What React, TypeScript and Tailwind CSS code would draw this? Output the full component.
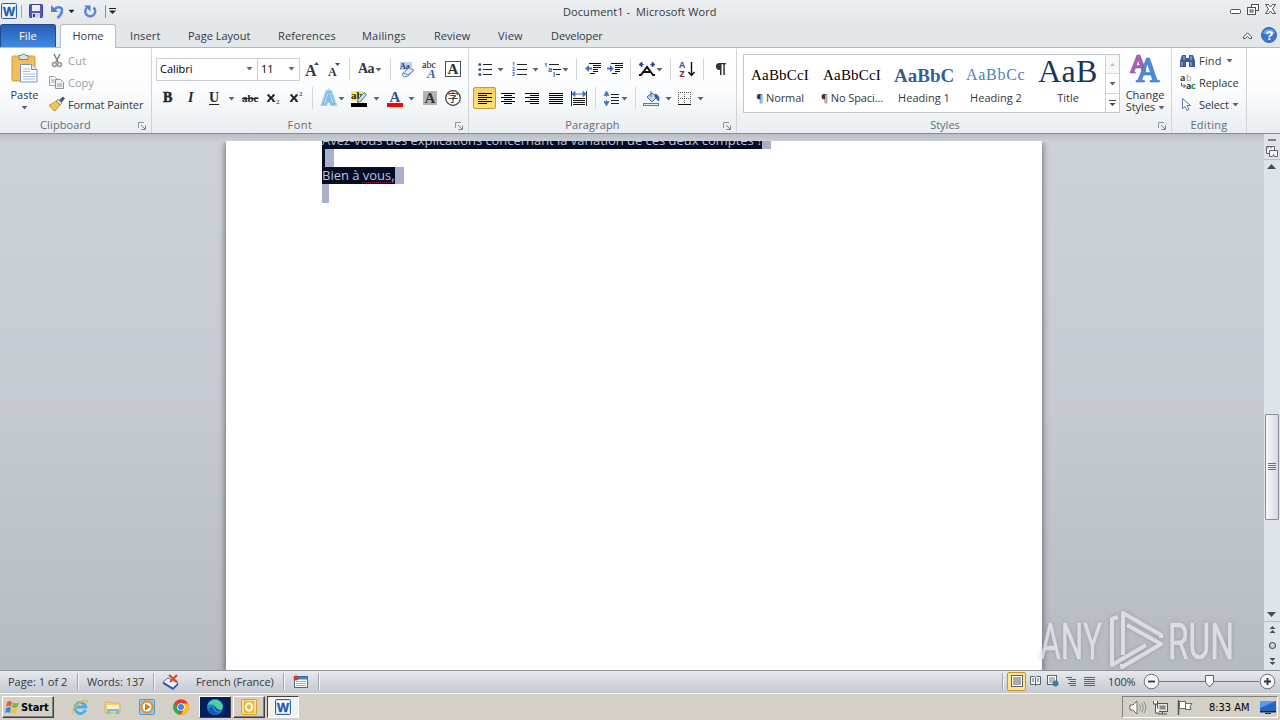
import React from 'react';

type Kids = { children?: React.ReactNode };

const Slot = ({ c = '', children }: Kids & { c?: string }) => (
  <div className={`flex shrink-0 items-center ${c}`}>{children}</div>
);
const Svg = ({ w, h, c = '', children }: Kids & { w: number; h: number; c?: string }) => (
  <svg width={w} height={h} viewBox={`0 0 ${w} ${h}`} className={`shrink-0 overflow-visible ${c}`}>{children}</svg>
);
const Arrow = ({ c = '' }: { c?: string }) => (
  <Svg w={5} h={3} c={c}><path d="M-.5 0h6L2.500 3.500z" fill="#60656c" /></Svg>
);
const Sep = () => <div className="h-[22px] w-px bg-[#d3d7dc]" />;
const Launcher = () => (
  <Svg w={8} h={8} c="absolute right-[5px] top-[10px]">
    <path d="M.5 6V.5H6" stroke="#8d939b" fill="none" />
    <path d="M3 3l4 4M7.500 3.500v4h-4" stroke="#7c838c" fill="none" />
  </Svg>
);
const GroupLabel = ({ children, launch = true, c = '' }: Kids & { launch?: boolean; c?: string }) => (
  <div className={`relative flex h-[21px] items-center justify-center pt-[3px] text-[#646c77] ${c}`}>
    {children}
    {launch && <Launcher />}
  </div>
);
const Lines = ({ rows }: { rows: [number, number][] }) => (
  <>{rows.map(([x, l], i) => <rect key={i} x={x} y={i * 2} width={l} height="1" fill="#000" />)}</>
);
const serif = 'Liberation Serif, serif';

function TitleBar() {
  return (
    <div className="flex h-[24px] items-center bg-linear-to-b from-[#edf0f3] to-[#e3e7ea] pb-[2px] text-[#33383f]">
      <Slot c="w-[21px] pl-px">
        <Svg w={16} h={16}>
          <rect x=".5" y=".5" width="15" height="15" rx="1" fill="#dce9f7" stroke="#2c62a8" />
          <rect x="2" y="2" width="12" height="12" fill="#fff" />
          <text x="2" y="13" fontSize="13" fontWeight="bold" fontFamily="Liberation Sans, sans-serif" fill="#1d5cae" stroke="#1d5cae" strokeWidth=".4" textLength="12" lengthAdjust="spacingAndGlyphs">W</text>
        </Svg>
      </Slot>
      <Slot c="w-[8px]"><div className="h-[13px] w-px bg-[#a3a8af]" /></Slot>
      <Slot c="w-[22px]">
        <Svg w={14} h={14}>
          <rect x=".5" y=".5" width="13" height="13" rx="1" fill="#5658b8" stroke="#3c3e94" />
          <rect x="3" y="1" width="8" height="6" fill="#e9effa" />
          <rect x="3" y="9" width="8" height="5" fill="#c9d3ea" />
          <rect x="4" y="10" width="2" height="3" fill="#34367f" />
        </Svg>
      </Slot>
      <Slot c="w-[18px]">
        <Svg w={13} h={13}>
          <path d="M3 5C6 1 11.500 1.500 11 5.500C10.700 8.500 9.500 10.500 6.500 13" fill="none" stroke="#5a88d6" strokeWidth="2.600" />
          <path d="M0 0v7h7z" fill="#4c80d2" />
        </Svg>
      </Slot>
      <Slot c="w-[15px]"><Svg w={5} h={3}><path d="M0 0h5L2.500 3z" fill="#222" stroke="#222" strokeWidth=".5" /></Svg></Slot>
      <Slot c="w-[21px]">
        <Svg w={13} h={13}>
          <path d="M2.500 3A5 5 0 1 0 9.500 2.500" fill="none" stroke="#5a88d6" strokeWidth="2.400" />
          <path d="M0 .5h6.500v6z" fill="#4a7fd2" />
        </Svg>
      </Slot>
      <Slot c="w-[4px]"><div className="h-[13px] w-px bg-[#8b9097]" /></Slot>
      <Svg w={7} h={6}><path d="M0 .5h7" stroke="#222" /><path d="M0 2.500h7L3.500 6z" fill="#222" /></Svg>
      <div className="ml-[447px] flex-1 whitespace-pre tracking-[0.08px]">Document1 -  Microsoft Word</div>
      <div className="flex items-center gap-[6px] pr-[4px] pb-[4px]">
        <Svg w={11} h={5} c="mt-[4px]"><rect x=".5" y=".5" width="10" height="4" rx="1" fill="#fff" stroke="#4c5159" /></Svg>
        <Svg w={12} h={11}>
          <rect x="4.500" y=".5" width="7" height="6" fill="#fff" stroke="#4c5159" />
          <rect x=".5" y="3.500" width="8" height="7" fill="#fff" stroke="#4c5159" />
          <rect x="3" y="6" width="3" height="2" fill="#fff" stroke="#4c5159" />
        </Svg>
        <Svg w={11} h={10}>
          <path d="M.5.5h3l2 2.500 2-2.500h3l-3 4.500 3 4.500h-3l-2-2.500-2 2.500h-3l3-4.500z" fill="#fff" stroke="#4c5159" />
        </Svg>
      </div>
    </div>
  );
}

function Tabs() {
  return (
    <div className="flex h-[24px] items-stretch border-b border-[#b4b9c0] bg-[#e3e7ea] text-[#33383f]">
      <div className="flex w-[56px] items-center justify-center rounded-t-[3px] border border-b-0 border-[#1c4a94] bg-linear-to-b from-[#2a5cb4] to-[#3f8ae0] pb-px text-white tracking-[0.1px]">File</div>
      <div className="-mb-px ml-[4px] flex w-[56px] items-center justify-center rounded-t-[3px] border border-b-0 border-[#b9bec5] bg-white pb-[2px]">Home</div>
      <div className="flex flex-1 items-center">
        <Slot c="w-[58px] pl-[14px] tracking-[0.150px]">Insert</Slot>
        <Slot c="w-[90px] pl-[14px] tracking-[0px]">Page Layout</Slot>
        <Slot c="w-[84px] pl-[14px] tracking-[0.100px]">References</Slot>
        <Slot c="w-[72px] pl-[14px] tracking-[0.200px]">Mailings</Slot>
        <Slot c="w-[64px] pl-[14px] tracking-[0.050px]">Review</Slot>
        <Slot c="w-[53px] pl-[14px] tracking-[0.150px]">View</Slot>
        <Slot c="pl-[14px] tracking-[-0.100px]">Developer</Slot>
      </div>
      <div className="flex items-center gap-[9px] pr-[3px] pb-px">
        <Svg w={9} h={7}><path d="M.5 5L4.500.8 8.500 5v1.500h-2L4.500 4.300 2.500 6.500h-2z" fill="#fff" stroke="#4c5159" /></Svg>
        <Svg w={16} h={16}>
          <circle cx="8" cy="8" r="7.500" fill="#3f78c8" stroke="#2f62ae" />
          <path d="M2 6a6.500 6 0 0 1 12 0q-6 3-12 0" fill="#78a6e4" />
          <text x="4.500" y="13" fontSize="13" fontWeight="bold" fontFamily="Liberation Sans, sans-serif" fill="#fff">?</text>
        </Svg>
      </div>
    </div>
  );
}

function Clipboard() {
  return (
    <div className="flex w-[152px] flex-col border-r border-[#cfd4da] pt-[6px]">
      <div className="flex h-[58px]">
        <div className="-mt-px flex w-[49px] flex-col items-center">
          <Svg w={27} h={31}>
            <rect x="1" y="3" width="23" height="25" rx="1.500" fill="#f0be5c" stroke="#d09a35" />
            <path d="M8 2.500h2a3 3 0 0 1 5 0h2v4H8z" fill="#dde0e4" stroke="#7e8389" />
            <path d="M9.500 11.500h11l5.500 5v12.500H9.500z" fill="#fbfcff" stroke="#7e93b4" />
            <path d="M20.500 11.500v5H26" fill="#dce6f4" stroke="#7e93b4" />
            <path d="M12 16h7M12 18.500h7M12 21h12M12 23.500h12M12 26h12" stroke="#a8bad6" />
          </Svg>
          <div className="mt-[4px] leading-[14px]">Paste</div>
          <Arrow c="mt-[4px]" />
        </div>
        <div className="-mt-[5px] flex flex-col text-[#9a9fa6]">
          <Slot c="h-[22px]">
            <Slot c="w-[19px] pl-[3px]"><Svg w={10} h={13}><path d="M2 0l4 8M8 0L4 8" stroke="#7e8389" strokeWidth="1.500" /><circle cx="2.500" cy="10.500" r="2" fill="none" stroke="#8e9399" strokeWidth="1.600" /><circle cx="7.500" cy="10.500" r="2" fill="none" stroke="#8e9399" strokeWidth="1.600" /></Svg></Slot>
            <span className="tracking-[0.3px]">Cut</span>
          </Slot>
          <Slot c="h-[22px]">
            <Slot c="w-[19px]"><Svg w={15} h={13}><path d="M.5.5h5l3 3v6h-8z" fill="#f5f6f7" stroke="#9ea3a9" /><path d="M2 4h4M2 6h4" stroke="#a4a8ad" /><path d="M6.500 3.500h5l3 3v6h-8z" fill="#f0f1f3" stroke="#8e9399" /><path d="M8 8h5M8 10h5" stroke="#94999f" /></Svg></Slot>
            <span>Copy</span>
          </Slot>
          <Slot c="h-[22px] text-[#33373d]">
            <Slot c="w-[19px]"><Svg w={16} h={14}><path d="M1 8l6-4 4 4-5 6C4 13 2 11 0 8z" fill="#efc64a" stroke="#b78f2c" strokeWidth=".8" /><path d="M7 4l2-2 4 4-2 2z" fill="#d8dbe0" stroke="#777" strokeWidth=".7" /><path d="M10.500 3L14 0l1.500 1.500-3 3.500z" fill="#54508c" stroke="#54508c" /></Svg></Slot>
            <span className="whitespace-nowrap tracking-[-0.1px]">Format Painter</span>
          </Slot>
        </div>
      </div>
      <GroupLabel c="pr-[20px] tracking-[0.1px]">Clipboard</GroupLabel>
    </div>
  );
}

const Combo = ({ w, children }: Kids & { w: string }) => (
  <div className={`flex h-[23px] items-center justify-between border border-[#cbcfd5] bg-white pb-px pl-[3px] pr-[5px] text-black ${w}`}>
    <span>{children}</span><Arrow />
  </div>
);

function FontGroup() {
  return (
    <div className="flex w-[317px] flex-col border-r border-[#cfd4da] pt-[6px]">
      <div className="flex h-[30px] items-center pl-[4px]">
        <Slot c="w-[101px]"><Combo w="w-[102px] shrink-0">Calibri</Combo></Slot>
        <Slot c="w-[48px]"><Combo w="w-[43px] pl-[2px]">11</Combo></Slot>
        <Slot c="w-[23px]"><Svg w={14} h={15}><text x="0" y="14" fontSize="16" fontWeight="bold" fontFamily={serif} fill="#33373d">A</text><path d="M9 3l2.500-3L14 3z" fill="#2d4f80" /></Svg></Slot>
        <Slot c="w-[21px]"><Svg w={12} h={15}><text x="0" y="14" fontSize="12" fontWeight="bold" fontFamily={serif} fill="#33373d">A</text><path d="M7 1l2.500 3L12 1z" fill="#2d4f80" /></Svg></Slot>
        <Slot c="w-[9px]"><Sep /></Slot>
        <Slot c="w-[18px]"><span className="font-['Liberation_Serif',serif] text-[14px] font-bold tracking-[-0.5px]">Aa</span></Slot>
        <Slot c="w-[14px]"><Arrow /></Slot>
        <Slot c="w-[8px]"><Sep /></Slot>
        <Slot c="w-[24px]"><Svg w={17} h={17}><rect x="2" y="1" width="12" height="8" fill="#bcd2ef" /><text x="2" y="8" fontSize="8" fontFamily={serif} fontWeight="bold" fill="#223a66">Aa</text><path d="M5 12l6-5 5 2-6 6-4 1-2-2z" fill="#e4ecfa" stroke="#6a88bd" /><path d="M5 12l5 2 6-5" fill="none" stroke="#6a88bd" /></Svg></Slot>
        <Slot c="w-[23px]"><Svg w={16} h={17}><text x="0" y="6.500" fontSize="10" fontFamily={serif} fill="#111" textLength="14">abc</text><text x="5" y="17" fontSize="13" fontStyle="italic" fontWeight="bold" fontFamily={serif} fill="#2f62b5">A</text></Svg></Slot>
        <Svg w={16} h={16}><rect x=".5" y=".5" width="15" height="15" fill="#fff" stroke="#3f556e" /><text x="2.500" y="13" fontSize="15" fontWeight="bold" fontFamily={serif} fill="#333">A</text></Svg>
      </div>
      <div className="flex h-[28px] items-center pl-[11px] font-['Liberation_Serif',serif] text-[14px] font-bold leading-none text-[#22262b]">
        <Slot c="w-[23px] [-webkit-text-stroke:0.5px]">B</Slot>
        <Slot c="w-[23px] pl-[2px] italic">I</Slot>
        <Slot c="w-[19px] underline underline-offset-2">U</Slot>
        <Slot c="w-[14px] pl-px"><Arrow /></Slot>
        <Slot c="w-[25px] text-[11px] line-through tracking-[0px]">abc</Slot>
        <Slot c="w-[23px]"><Svg w={13} h={14}><path d="M1 4l6 6M7 4l-6 6" stroke="#222" strokeWidth="1.800" /><path d="M0 4h2.500M5.500 4H8M0 10.500h2.500M5.500 10.500H8" stroke="#222" /><text x="9" y="13" fontSize="7" fill="#2f62b5">2</text></Svg></Slot>
        <Slot c="w-[22px]"><Svg w={13} h={14}><path d="M1 4l6 6M7 4l-6 6" stroke="#222" strokeWidth="1.800" /><path d="M0 4h2.500M5.500 4H8M0 10.500h2.500M5.500 10.500H8" stroke="#222" /><text x="9" y="5" fontSize="7" fill="#2f62b5">2</text></Svg></Slot>
        <Slot c="w-[9px]"><Sep /></Slot>
        <Slot c="w-[17px]"><Svg w={15} h={16}><text x="1.500" y="14" fontSize="17" fontFamily="Liberation Sans, sans-serif" fill="#fff" stroke="#a5d2f2" strokeWidth="4">A</text><text x="1.500" y="14" fontSize="17" fontFamily="Liberation Sans, sans-serif" fill="#fff" stroke="#78b6e4" strokeWidth="1.400">A</text></Svg></Slot>
        <Slot c="w-[13px] pl-px"><Arrow /></Slot>
        <Slot c="w-[22px]"><Svg w={17} h={17}><rect x="0" y="1" width="12" height="10" fill="#f3ef62" /><text x="0" y="9" fontSize="11" fontWeight="bold" fontFamily={serif} fill="#222">ab</text><path d="M7 9.500l6-7 2.500 2-6 7-3 1z" fill="#cfdcee" stroke="#395c96" strokeWidth=".9" /><rect x="0" y="13" width="16" height="4" fill="#000" /></Svg></Slot>
        <Slot c="w-[13px] pl-px"><Arrow /></Slot>
        <Slot c="w-[22px] pl-px"><Svg w={16} h={17}><text x="2.500" y="12" fontSize="15" fontWeight="bold" fontFamily={serif} fill="#2c5391">A</text><rect x="0" y="13" width="16" height="4" fill="#f00" /></Svg></Slot>
        <Slot c="w-[14px] pl-px"><Arrow /></Slot>
        <Slot c="w-[23px] pl-px"><Svg w={14} h={14}><rect width="14" height="14" fill="#b4b4b4" /><text x="1.500" y="12" fontSize="15" fontWeight="bold" fontFamily={serif} fill="#333">A</text></Svg></Slot>
        <Svg w={16} h={16}><circle cx="8" cy="8" r="7.300" fill="#fff" stroke="#333" strokeWidth="1.200" /><text x="2.500" y="12" fontSize="11" fontWeight="normal" fontFamily="Noto Sans CJK TC, sans-serif" fill="#111">字</text></Svg>
      </div>
      <GroupLabel c="pr-[20px] tracking-[0.5px]">Font</GroupLabel>
    </div>
  );
}

function Paragraph() {
  return (
    <div className="flex w-[268px] flex-col border-r border-[#cfd4da] pt-[6px]">
      <div className="flex h-[30px] items-center pl-[9px]">
        <Slot c="w-[22px]"><Svg w={14} h={13}>{[1.500, 6.500, 11.500].map(y => <g key={y}><circle cx="1.800" cy={y} r="1.500" fill="#445f8d" /><path d={`M5 ${y}h9`} stroke="#222" /></g>)}</Svg></Slot>
        <Slot c="w-[12px]"><Arrow c="-ml-[2px]" /></Slot>
        <Slot c="w-[21px]"><Svg w={15} h={14}>{[1, 2, 3].map(n => <g key={n}><text x="0" y={n * 5 - 1} fontSize="5" fontWeight="bold" fill="#2f62b5">{n}</text><path d={`M5 ${n * 5 - 2.500}h10`} stroke="#222" /></g>)}</Svg></Slot>
        <Slot c="w-[12px]"><Arrow /></Slot>
        <Slot c="w-[19px]"><Svg w={17} h={15}><text x="-1" y="5" fontSize="6" fontWeight="bold" fill="#2f62b5">1</text><text x="3" y="10" fontSize="7" fontWeight="bold" fill="#2f62b5">a</text><text x="8" y="15" fontSize="7" fontWeight="bold" fill="#2f62b5">i</text><path d="M4 2.500h10M8 7.500h8M11 12.500h4" stroke="#222" /></Svg></Slot>
        <Slot c="w-[12px]"><Arrow c="-ml-px" /></Slot>
        <Slot c="w-[9px]"><Sep /></Slot>
        <Slot c="w-[22px]"><Svg w={16} h={12}><path d="M4 .5h12M8 2.500h8M8 4.500h8M8 6.500h5M8 8.500h5M5 10.500h5" stroke="#111" strokeWidth="1.200" /><path d="M0 5.500l4-3.500v2.500h3v2H4V9z" fill="#3f74c4" /></Svg></Slot>
        <Slot c="w-[23px]"><Svg w={16} h={12}><path d="M4 .5h12M8 2.500h8M8 4.500h8M8 6.500h5M8 8.500h5M5 10.500h5" stroke="#111" strokeWidth="1.200" /><path d="M7 5.500L3 2v2.500H0v2h3V9z" fill="#3f74c4" /></Svg></Slot>
        <Slot c="w-[9px]"><Sep /></Slot>
        <Slot c="w-[19px]"><Svg w={16} h={15}><path d="M0 13h2L8 5l6 8h2M4 10h8" stroke="#111" strokeWidth="2" fill="none" /><path d="M0 2.500L3 0v5zM16 2.500L13 0v5zM3 2.500h2M11 2.500h2" fill="#27408f" stroke="#27408f" strokeWidth=".8" /></Svg></Slot>
        <Slot c="w-[12px]"><Arrow c="-ml-px" /></Slot>
        <Slot c="w-[9px]"><Sep /></Slot>
        <Slot c="w-[24px]"><Svg w={15} h={16}><text x="0" y="7" fontSize="9" fontWeight="bold" fill="#2f62b5">A</text><text x="0.500" y="16" fontSize="9" fontWeight="bold" fill="#a3262a">Z</text><path d="M12.500 1v13M9.500 11l3 3.500 3-3.500" stroke="#111" fill="none" strokeWidth="1.400" /></Svg></Slot>
        <Slot c="w-[12px]"><Sep /></Slot>
        <Svg w={11} h={12}><path d="M4 0h7v1.200H9.800V12H8.300V1.200H6.500V12H5V7A3.500 3.500 0 0 1 4 0z" fill="#333" /></Svg>
      </div>
      <div className="flex h-[28px] items-center pl-[4px]">
        <Slot c="w-[28px]"><div className="flex h-[22px] w-[23px] items-center justify-center rounded-[2px] border border-[#c09a3c] bg-linear-to-b from-[#f9d061] to-[#fde07a]"><Svg w={14} h={11}><Lines rows={[[0, 14], [0, 9], [0, 14], [0, 9], [0, 14], [0, 9]]} /></Svg></div></Slot>
        <Slot c="w-[24px]"><Svg w={14} h={11}><Lines rows={[[0, 14], [3, 8], [0, 14], [3, 8], [0, 14], [3, 8]]} /></Svg></Slot>
        <Slot c="w-[24px]"><Svg w={14} h={11}><Lines rows={[[0, 14], [5, 9], [0, 14], [5, 9], [0, 14], [5, 9]]} /></Svg></Slot>
        <Slot c="w-[22px]"><Svg w={14} h={11}><Lines rows={[[0, 14], [0, 14], [0, 14], [0, 14], [0, 14], [0, 14]]} /></Svg></Slot>
        <Slot c="w-[24px]"><Svg w={16} h={15}><path d="M.5 0v15M15.500 0v15" stroke="#333" /><path d="M1 3l3-2.500v5zM15 3l-3-2.500v5zM3 3h10" fill="#3f74c4" stroke="#3f74c4" /><path d="M2 7.500h12M2 9.500h12M2 11.500h12M2 13.500h12" stroke="#111" /></Svg></Slot>
        <Slot c="w-[9px]"><Sep /></Slot>
        <Slot c="w-[17px]"><Svg w={15} h={15}><path d="M2.500 0L5 4.500H0zM2.500 15L5 10.500H0zM2.500 4v2M2.500 9v2" fill="#3f74c4" stroke="#3f74c4" strokeWidth=".7" /><path d="M7 3.500h8M7 6.500h8M7 9.500h8M7 12.500h8" stroke="#222" /></Svg></Slot>
        <Slot c="w-[14px] pl-px"><Arrow /></Slot>
        <Slot c="w-[9px]"><Sep /></Slot>
        <Slot c="w-[22px]"><Svg w={16} h={15}><path d="M3 6l5-4 5 4-5 5z" fill="#c5d9f2" stroke="#47699f" /><path d="M7 6V0" stroke="#47699f" /><path d="M11 3q5 1 4 7-2-1-4-4z" fill="#2f5da8" stroke="#2f5da8" strokeWidth=".6" /><rect x="-.5" y="12.500" width="15" height="2" fill="#e4ebf5" stroke="#5b7db2" /></Svg></Slot>
        <Slot c="w-[12px]"><Arrow /></Slot>
        <Slot c="w-[20px]"><Svg w={13} h={13}><path d="M.5 0v12M6.500 0v12M12.500 0v12M0 .5h13M0 6.500h13" stroke="#555" strokeDasharray="1 1" /><path d="M0 12.500h13" stroke="#111" /></Svg></Slot>
        <Arrow />
      </div>
      <GroupLabel c="pr-[20px] tracking-[0.1px]">Paragraph</GroupLabel>
    </div>
  );
}

const StyleCell = ({ sample, name, c, nc = '' }: { sample: string; name: string; c: string; nc?: string }) => (
  <div className="flex w-[72px] shrink-0 flex-col items-center">
    <div className={`mt-[6px] flex h-[28px] w-[60px] items-center overflow-hidden whitespace-nowrap leading-none ${c}`}>{sample}</div>
    <div className={`whitespace-nowrap leading-[18px] ${nc}`}>{name}</div>
  </div>
);

function Styles() {
  return (
    <div className="flex w-[435px] flex-col border-r border-[#cfd4da] pt-[6px]">
      <div className="flex h-[58px] pl-[6px]">
        <div className="flex h-[59px] w-[377px] shrink-0 border border-[#c3c8ce] bg-white">
          <StyleCell sample="AaBbCcI" name="¶ Normal" nc="tracking-[-0.1px]" c="pl-px font-['Liberation_Serif',serif] text-[15px] tracking-[0.2px] text-black" />
          <StyleCell sample="AaBbCcI" name="¶ No Spaci..." nc="tracking-[-0.1px]" c="pl-px font-['Liberation_Serif',serif] text-[15px] tracking-[0.2px] text-black" />
          <StyleCell sample="AaBbCc" name="Heading 1" c="font-['Liberation_Serif',serif] text-[19px] font-bold text-[#365f91]" />
          <StyleCell sample="AaBbCc" name="Heading 2" c="font-['Liberation_Serif',serif] text-[16px] tracking-[0.7px] text-[#4f81bd]" />
          <StyleCell sample="AaB" name="Title" c="pb-[8px] font-['Liberation_Serif',serif] text-[32px] tracking-[0.3px] text-[#17365d]" />
          <div className="ml-px flex w-[14px] flex-col border-l border-[#cfd3d8]">
            <div className="flex flex-1 items-center justify-center border-b border-[#d8dbe0] bg-[#f6f7f8]"><Svg w={5} h={3}><path d="M0 3h5L2.500 0z" fill="#bbbfc5" /></Svg></div>
            <div className="flex flex-1 items-center justify-center border-b border-[#cfd3d8]"><Arrow /></div>
            <div className="flex flex-1 items-center justify-center"><Svg w={7} h={6}><path d="M0 .5h7" stroke="#444" /><path d="M.5 3h6L3.500 6z" fill="#444" /></Svg></div>
          </div>
        </div>
        <div className="flex w-[50px] flex-col items-center leading-[12px]">
          <Svg w={30} h={29} c="mb-[6px]">
            <path d="M0 19l7-18h3l6 16-3 2-2-5H5.500l-1.500 4 1.500.5v.5zM6.200 11.500h4L8.200 6z" fill="#b25ab8" stroke="#8f3f9c" strokeWidth=".5" />
            <path d="M6 28v-1.500l2-.5L16.500 4h3L27 26l2.500.5V28H20v-1.500l2.500-.5-1.500-5h-7.500l-1.700 5 2.700.5V28zM14.300 18.500h6L17.500 9.500z" fill="#4f8ade" stroke="#3568b4" strokeWidth=".5" />
          </Svg>
          <span>Change</span>
          <span className="flex items-center gap-[4px]">Styles <Arrow /></span>
        </div>
      </div>
      <GroupLabel c="pr-[18px]">Styles</GroupLabel>
    </div>
  );
}

function Editing() {
  return (
    <div className="flex w-[75px] flex-col border-r border-[#cfd4da] pt-[2px]">
      <div className="flex h-[62px] flex-col">
        <Slot c="h-[21px] pl-[8px]"><Slot c="w-[19px]"><Svg w={15} h={13}><path d="M2 1h4v3h3V1h4l2 6v6H9V8H6v5H0V7z" fill="#3b5c9e" /><path d="M2 8v4M11 8v4M4 2v4M11 2v4" stroke="#a9c1ea" /></Svg></Slot><span className="tracking-[0.2px]">Find</span><Arrow c="ml-[5px]" /></Slot>
        <Slot c="h-[23px] pl-[8px]"><Slot c="w-[19px]"><Svg w={16} h={15}><text x="0" y="6" fontSize="9" fontWeight="bold" fill="#444">a</text><text x="6" y="6" fontSize="9" fill="#999">b</text><path d="M1.500 8v3h4M3.500 9l2 2-2 2" fill="none" stroke="#3a5ca0" /><text x="6" y="14" fontSize="9" fontWeight="bold" fill="#333">a</text><text x="11" y="14" fontSize="9" fontWeight="bold" fill="#2f8a3c">c</text></Svg></Slot><span className="tracking-[-0.05px]">Replace</span></Slot>
        <Slot c="h-[21px] pl-[8px]"><Slot c="w-[19px] pl-[2px]"><Svg w={9} h={13}><path d="M.5.5v10l2.500-2 2 4 2-1-2-4h3.500z" fill="#fff" stroke="#5b7aa8" /></Svg></Slot><span className="tracking-[-0.1px]">Select</span><Arrow c="ml-[4px]" /></Slot>
      </div>
      <GroupLabel launch={false} c="tracking-[0.3px]">Editing</GroupLabel>
    </div>
  );
}

function Workspace() {
  return (
    <div className="flex h-[536px]">
      <div className="flex w-[1264px] flex-col bg-linear-to-b from-[#cdd1d8] via-[#c6cad2] to-[#b6bac1]">
        <div className="h-[7px] shrink-0 bg-linear-to-b from-[#b9bfc5] to-[#cbcfd5]" />
        <div className="flex min-h-0 flex-1 justify-center overflow-hidden pl-[4px]">
          <div className="w-[816px] bg-white pl-[96px] font-['Open_Sans',sans-serif] text-[13px] text-[#b9c4dc] shadow-[0_4px_5px_2px_rgba(90,95,105,0.65)]">
            <div className="flex h-[8px] items-end overflow-hidden">
              <span className="h-[17px] w-[440px] whitespace-nowrap bg-[#050c25] leading-[17px] tracking-[-0.035px]">Avez-vous des explications concernant la variation de ces deux comptes ?</span>
              <span className="h-[17px] w-[9px] bg-[#a9b0ca]" />
            </div>
            <div className="flex h-[18px]"><span className="w-[3px] bg-[#050c25]" /><span className="w-[9px] bg-[#a9b0ca]" /></div>
            <div className="flex h-[17px]">
              <span className="w-[73px] whitespace-nowrap bg-[#050c25] leading-[17px] tracking-[-0.020px]">Bien à <span className="underline decoration-[#8a2c48] decoration-dotted decoration-1 underline-offset-2">vous,</span></span>
              <span className="w-[9px] bg-[#a9b0ca]" />
            </div>
            <div className="h-[19px] w-[7px] bg-[#a9b0ca]" />
          </div>
        </div>
      </div>
      <div className="flex w-[16px] flex-col items-center bg-[#dfe3ea]">
        <div className="mt-[5px] h-[2px] w-[8px] bg-[#7d838c]" />
        <Svg w={12} h={12} c="mt-[4px]"><path d="M.5 1.500h8v7h-8zM2 1.500v2M5 1.500v2" fill="#f4f6f9" stroke="#5d646e" /><path d="M3.500 5.500h8v6h-3l-1-2-1 2h-3z" fill="#f4f6f9" stroke="#5d646e" /></Svg>
        <div className="mt-[2px] h-px w-full bg-[#b8bdc6]" />
        <Svg w={9} h={5} c="mt-[4px] mr-px"><path d="M0 5h9L4.500 0z" fill="#474c57" /></Svg>
        <div className="mt-[245px] flex h-[106px] w-[14px] flex-col items-center justify-center gap-px rounded-[1px] border border-[#858b98] bg-linear-to-r from-[#f8f9fc] to-[#d3d9e6] pb-[2px]">
          <div className="h-px w-[8px] bg-[#6c727e]" /><div className="h-px w-[8px] bg-[#6c727e]" /><div className="h-px w-[8px] bg-[#6c727e]" /><div className="h-px w-[8px] bg-[#6c727e]" />
        </div>
        <Svg w={9} h={5} c="mt-[92px] mr-px"><path d="M0 0h9L4.500 5z" fill="#474c57" /></Svg>
        <div className="mt-[4px] h-px w-full bg-[#b8bdc6]" />
        <Svg w={7} h={7} c="mt-[4px]"><path d="M.5 3h6l-3-3zM.5 7h6l-3-3z" fill="#474c57" /></Svg>
        <Svg w={7} h={7} c="mt-[9px]"><circle cx="3.500" cy="3.500" r="3" fill="#cfd3db" stroke="#565c67" strokeWidth="1.200" /></Svg>
        <Svg w={7} h={7} c="mt-[9px]"><path d="M.5 0h6l-3 3zM.5 4h6l-3 3z" fill="#474c57" /></Svg>
      </div>
    </div>
  );
}

const Divide = () => <><div className="h-[17px] w-px bg-[#9fa5ae]" /><div className="h-[17px] w-px bg-[#f4f6f8]" /></>;

function StatusBar() {
  return (
    <div className="flex h-[23px] items-center border-t border-[#8f959e] bg-linear-to-b from-[#e6e9ed] to-[#c4c9d0] pb-[2px] text-[#33383f]">
      <Slot c="w-[77px] pl-[8px]">Page: 1 of 2</Slot><Divide />
      <Slot c="w-[74px] pl-[8px] tracking-[-0.05px]">Words: 137</Slot><Divide />
      <Slot c="w-[41px] pl-[8px]"><Svg w={17} h={15}><path d="M0 8l5-4 10 5-5 5z" fill="#eef4ff" stroke="#4170b5" /><path d="M0 9l10 6 5-5" fill="none" stroke="#2a5aa6" strokeWidth="1.500" /><path d="M6 1l8 7M14 1L7 8" stroke="#d9472b" strokeWidth="2" /></Svg></Slot>
      <Slot c="w-[87px] tracking-[-0.080px]">French (France)</Slot><Divide />
      <Slot c="w-[33px] pl-[8px]"><Svg w={15} h={13}><rect x="1.500" y="1.500" width="13" height="11" fill="#fff" stroke="#3d68ad" /><rect x="2" y="2" width="12" height="2.500" fill="#4a7cc6" /><path d="M3 6.500h10M3 8.500h10M3 10.500h10" stroke="#9bb2d6" /><circle cx="3" cy="3" r="2.500" fill="#cf3b2c" /></Svg></Slot><Divide />
      <div className="flex-1" />
      <Divide />
      <div className="ml-[3px] flex h-[19px] w-[19px] items-center justify-center rounded-[2px] border border-[#c2963a] bg-[#fde38a]"><Svg w={12} h={12}><rect x=".5" y=".5" width="11" height="11" fill="#fff" stroke="#5a5f66" /><path d="M2 3h8M2 5h8M2 7h8M2 9h8" stroke="#555" /></Svg></div>
      <Slot c="w-[18px] pl-[4px]"><Svg w={11} h={10}><path d="M.5.5h4l1 1 1-1h4v8h-4l-1 1-1-1h-4zM5.500 1.500v8M2 3h2M2 5h2M7 3h2M7 5h2" fill="#f6f8fa" stroke="#5d636c" /></Svg></Slot>
      <Slot c="w-[18px] pl-[3px]"><Svg w={12} h={12}><rect x=".5" y=".5" width="9" height="9" fill="#fff" stroke="#5d636c" /><path d="M2 3h6M2 5h6M2 7h4" stroke="#777" /><circle cx="8.500" cy="8.500" r="3" fill="#3c7d9b" /></Svg></Slot>
      <Slot c="w-[18px] pl-[4px]"><Svg w={10} h={9}><path d="M0 .5h6M2 2.500h8M4 4.500h6M2 6.500h8M4 8.500h6" stroke="#5d636c" /></Svg></Slot>
      <Slot c="w-[28px] pl-[4px]"><Svg w={11} h={9}><path d="M0 .5h11M0 2.500h11M0 4.500h11M0 6.500h11M0 8.500h11" stroke="#5d636c" /></Svg></Slot>
      <Slot c="w-[35px] tracking-[-0.1px]">100%</Slot>
      <Svg w={132} h={17} c="mr-[5px]">
        <path d="M16 8.500h100" stroke="#70767f" />
        <circle cx="8.500" cy="8.500" r="7.300" fill="#f3f5f7" stroke="#6a7079" /><path d="M5 8.500h7" stroke="#333" strokeWidth="1.800" />
        <circle cx="124.500" cy="8.500" r="7.300" fill="#f3f5f7" stroke="#6a7079" /><path d="M121 8.500h7M124.500 5v7" stroke="#333" strokeWidth="1.800" />
        <path d="M62.500 2.500h8v7l-4 4.500-4-4.500z" fill="#f8f9fa" stroke="#5d636c" />
      </Svg>
    </div>
  );
}

function Taskbar() {
  return (
    <div className="flex h-[27px] items-center border-t border-[#f5f4f1] bg-[#d4d0c8] pl-[2px] font-['DejaVu_Sans_Condensed','DejaVu_Sans',sans-serif] text-black">
      <div className="flex h-[22px] w-[52px] items-center gap-[2px] border border-t-white border-l-white border-r-[#404040] border-b-[#404040] pl-[2px] font-bold shadow-[inset_-1px_-1px_0_#808080]">
        <Svg w={14} h={14}><path d="M2 2q3-2 5 0L6 7Q4 5 1 6.500z" fill="#e8602c" /><path d="M8 2.500q3 1.500 6 0L12.500 7Q10 9 7 7.200z" fill="#7dba3c" /><path d="M1 8q3-2 5 0l-1 5Q3 11.500 0 13z" fill="#3f8ae0" /><path d="M7 8.500q3 1.500 5.500 0L11 13q-3 1.500-5 0z" fill="#f6c22d" /></Svg>
        <span className="tracking-[-0.1px]">Start</span>
      </div>
      <Slot c="ml-[18px] w-[33px]"><Svg w={16} h={16}><path d="M13.500 11A5.500 5.500 0 1 1 13.800 8H4" fill="none" stroke="#43b0e6" strokeWidth="2.800" /><path d="M1 15C-1 12 6 3 12 1.500q4-1 3 3" fill="none" stroke="#e8b93c" strokeWidth="1.300" /></Svg></Slot>
      <Slot c="w-[34px]"><Svg w={16} h={15}><path d="M0 2h6l1 1h8v10H0z" fill="#f2d271" stroke="#cfa63c" strokeWidth=".6" /><path d="M2 5h12v4H2z" fill="#fdf2bd" /><path d="M2 14V9h12v5h-3v-3H5v3z" fill="#74bce8" /></Svg></Slot>
      <Slot c="w-[34px]"><Svg w={16} h={16}><rect x=".5" y=".5" width="15" height="15" rx="1" fill="#8fc6ea" stroke="#4c98cf" /><circle cx="8" cy="8" r="6.500" fill="#f08a1d" /><circle cx="8" cy="8" r="4.500" fill="#fff" /><path d="M6 4.500v7l5.500-3.500z" fill="#e86f10" /></Svg></Slot>
      <Slot c="w-[26px]"><Svg w={16} h={16}><circle cx="8" cy="8" r="7.800" fill="#e33b2e" /><path d="M1.200 4.200L6 11l1 4.700A7.800 7.800 0 0 1 1.200 4.200z" fill="#35a853" /><path d="M8 4.500h7A7.800 7.800 0 0 1 7.500 15.800L11.500 9z" fill="#fbc116" /><circle cx="8" cy="8" r="3.800" fill="#fff" /><circle cx="8" cy="8" r="3" fill="#4285f4" /></Svg></Slot>
      <div className="flex h-[22px] w-[32px] items-center justify-center border border-t-[#fff] border-l-white border-r-[#404040] border-b-[#404040] bg-[#041d5c]"><Svg w={16} h={16}><circle cx="8" cy="8" r="8" fill="#1b86d4" /><path d="M.5 6A8 8 0 0 1 16 8q-.5 3.500-5 3-3-.5-2-3Q7 4 .5 6z" fill="#4fd0a0" /><path d="M6 8q-1 5 6 6-5 4-10-1Q1 8 6 8z" fill="#1258a8" /><path d="M9 8q0 3 5 3-5 2-6-3z" fill="#041d5c" /></Svg></div>
      <div className="ml-[2px] flex h-[22px] w-[32px] items-center justify-center border border-t-white border-l-white border-r-[#404040] border-b-[#404040] shadow-[inset_-1px_-1px_0_#808080]"><Svg w={16} h={16}><rect x=".5" y=".5" width="15" height="15" rx="1" fill="#f8dd8d" stroke="#dc9e1c" /><rect x="3" y="2" width="10" height="12" fill="#f1b434" /><ellipse cx="8" cy="8" rx="3" ry="3.800" fill="none" stroke="#fff" strokeWidth="2" /></Svg></div>
      <div className="ml-[2px] flex h-[22px] w-[32px] items-center justify-center border border-t-[#404040] border-l-[#404040] border-r-white border-b-white bg-[#f3f2ef]"><Svg w={16} h={16}><rect x=".5" y=".5" width="15" height="15" rx="1" fill="#cfe2f7" stroke="#2c62a8" /><rect x="2" y="2" width="12" height="12" fill="#fff" /><text x="2" y="13" fontSize="13" fontWeight="bold" fontFamily="Liberation Sans, sans-serif" fill="#1d5cae" stroke="#1d5cae" strokeWidth=".4" textLength="12" lengthAdjust="spacingAndGlyphs">W</text></Svg></div>
      <div className="flex-1" />
      <div className="mr-[2px] flex h-[22px] w-[156px] items-center border border-t-[#808080] border-l-[#808080] border-r-white border-b-white pl-[6px]">
        <Slot c="w-[24px]"><Svg w={17} h={15}><path d="M1 5h3l4-4v13l-4-4H1z" fill="#fff" stroke="#666" /><path d="M10.500 4.500q2 3 0 6M12.500 3q3.500 4.500 0 9M14.800 1.500q4 6 0 12" fill="none" stroke="#777" strokeWidth=".8" /></Svg></Slot>
        <Slot c="w-[24px]"><Svg w={17} h={15}><rect x="4.500" y="3.500" width="10" height="8" fill="#e6e6e6" stroke="#555" /><rect x="6.500" y="5.500" width="6" height="4" fill="#888" /><path d="M5 14h9M9.500 12v2" stroke="#555" /><path d="M.5 1v3h4V1M2.500 4v9h4" fill="#fff" stroke="#555" /></Svg></Slot>
        <Slot c="w-[32px]"><Svg w={16} h={15}><path d="M1.500 0v15" stroke="#555" strokeWidth="1.500" /><path d="M2.500 1.500h6v7h-6zM8.500 3.500h6.500l-2 3 1 3H8.500z" fill="#fff" stroke="#666" /></Svg></Slot>
        <span className="w-[51px] whitespace-nowrap tracking-[-0.02px]">8:33 AM</span>
        <Svg w={16} h={13}><rect x="0" y="0" width="16" height="10" fill="#2166c4" /><path d="M0 0h16L0 7z" fill="#5d9be6" /><path d="M0 10h16v1.500H0z" fill="#223" /><path d="M5 12.500h6" stroke="#333" /></Svg>
      </div>
    </div>
  );
}

function Watermark() {
  return (
    <svg width="200" height="64" viewBox="0 0 200 64" className="pointer-events-none absolute left-[1036px] top-[607px] overflow-visible opacity-65 drop-shadow-[0_0_2px_rgba(90,95,105,0.55)]">
      <g fill="#eef0f3" stroke="#eef0f3" strokeWidth=".5" fontFamily="Roboto, sans-serif" fontSize="50" fontWeight="400">
        <text x="4" y="52" textLength="62" lengthAdjust="spacingAndGlyphs">ANY</text>
        <text x="132" y="52" textLength="66" lengthAdjust="spacingAndGlyphs">RUN</text>
      </g>
      <g fill="none" stroke="#eef0f3" strokeWidth="4" strokeLinejoin="round">
        <path d="M87 48V6l38 22v3" />
        <path d="M91 18l34 19-39 23v-3" />
        <path d="M82 10l-6 2v46l34-20" />
      </g>
    </svg>
  );
}

export default function App() {
  return (
    <div className="relative flex h-[720px] w-[1280px] flex-col overflow-hidden font-['Open_Sans',sans-serif] text-[11px] leading-none text-[#33373d]">
      <TitleBar />
      <Tabs />
      <div className="flex h-[86px] border-b border-[#868c95] bg-linear-to-b from-white via-[#fbfcfd] to-[#e9edf1]">
        <Clipboard />
        <FontGroup />
        <Paragraph />
        <Styles />
        <Editing />
      </div>
      <Workspace />
      <StatusBar />
      <Taskbar />
      <Watermark />
    </div>
  );
}
